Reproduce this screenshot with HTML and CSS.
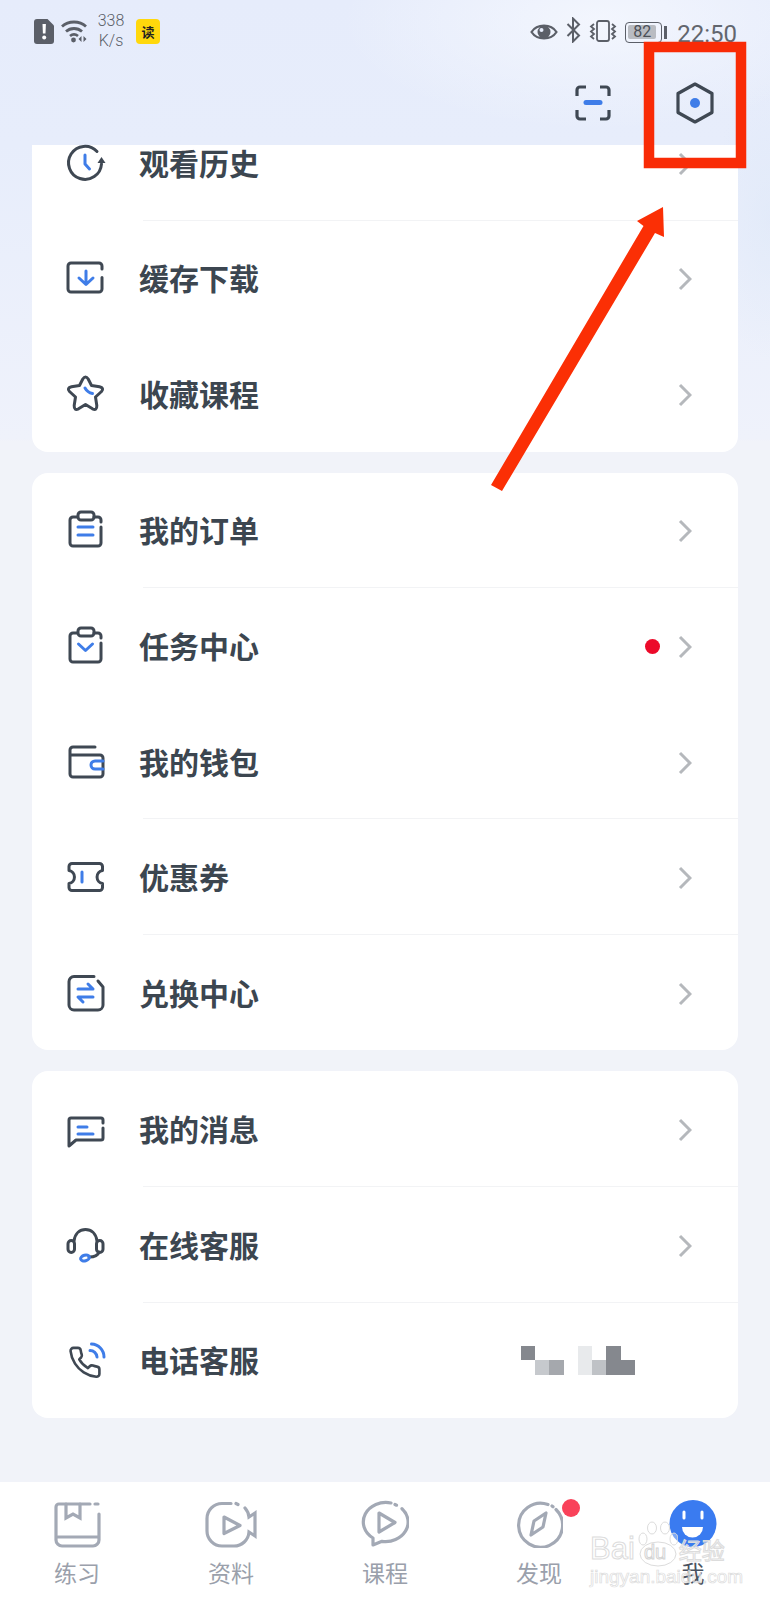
FILE: index.html
```html
<!DOCTYPE html>
<html lang="zh-CN">
<head>
    <meta charset="UTF-8">
    <meta name="viewport" content="width=device-width, initial-scale=1.0">
    <title>我的</title>
    <link rel="stylesheet" href="styles.css">
</head>
<body>
<div class="screen">

    <div class="status">
        <svg class="st-alert" width="20" height="25" viewBox="0 0 20 25"><path d="M3 0H13.5L20 6.5V22a3 3 0 0 1-3 3H3a3 3 0 0 1-3-3V3a3 3 0 0 1 3-3z" fill="#5b5f68"/><path d="M8.5 5h3.4l-.4 9.500H8.900z" fill="#fff"/><circle cx="10.200" cy="18.500" r="2" fill="#fff"/></svg>
        <svg class="st-wifi" width="27" height="24" viewBox="0 0 27 24" fill="none" stroke="#5b5f68" stroke-width="2.800"><path d="M1 7.500C7.500 1.500 18.500 1.500 25 7.500"/><path d="M5 12.500c4.500-4 11.500-4 16 0"/><path d="M9 17c2.500-2 5.500-2 8 0"/><circle cx="12.500" cy="21" r="2.400" fill="#5b5f68" stroke="none"/><path d="M20.500 17v6l-3-3zM22.500 17v6l3-3z" fill="#5b5f68" stroke="none"/></svg>
        <div class="speed">338<br>K/s</div>
        <div class="reader">读</div>
        <div class="status-right">
            <svg width="28" height="18" viewBox="0 0 28 18" fill="none" stroke="#5b5f68" stroke-width="2.200"><path d="M1.500 9C7 .5 21 .5 26.500 9 21 17.500 7 17.500 1.500 9z"/><circle cx="14" cy="9" r="6.500" fill="#5b5f68" stroke="none"/><circle cx="11.500" cy="7" r="2" fill="#e6ecfb" stroke="none"/></svg>
            <svg class="st-bt" width="15" height="26" viewBox="0 0 15 26" fill="none" stroke="#5b5f68" stroke-width="2"><path d="M1.500 7L13 18.500 7 24.500V1.500L13 7.500 1.500 19"/></svg>
            <svg class="st-vib" width="28" height="22" viewBox="0 0 28 22" fill="none" stroke="#5b5f68" stroke-width="1.800"><rect x="8" y="1" width="12" height="20" rx="2"/><path d="M5 4L2 6.500 5 9 2 11.500 5 14 2 16.500 5 19"/><path d="M23 4l3 2.500L23 9l3 2.500L23 14l3 2.500L23 19"/></svg>
            <div class="battery"><div class="battery-level">82</div></div>
            <div class="battery-tip"></div>
            <div class="clock">22:50</div>
        </div>
    </div>

    <div class="topbar">
        <svg class="scan" width="36" height="36" viewBox="0 0 36 36" fill="none" stroke="#3f4853" stroke-width="3.200"><path d="M2 11V5a3 3 0 0 1 3-3h6M25 2h6a3 3 0 0 1 3 3v6M34 25v6a3 3 0 0 1-3 3h-6M11 34H5a3 3 0 0 1-3-3v-6"/><path d="M11 17.500h14" stroke="#3f7de8" stroke-width="5" stroke-linecap="round"/></svg>
        <svg class="hex" width="38" height="42" viewBox="0 0 38 42" fill="none"><path d="M19 2L36 11.500V30.500L19 40 2 30.500V11.500z" stroke="#3f4853" stroke-width="3.200" stroke-linejoin="round"/><circle cx="19" cy="21" r="5" fill="#3f7de8"/></svg>
    </div>

    <div class="content">
        <div class="card card-clipped">
            <div class="row row-clipped sep">
                <svg class="ico" viewBox="0 0 40 40"><path class="dk" d="M32 8.500A16.500 16.500 0 1 0 36.500 21"/><path d="M32.500 20h8l-4-6z" fill="#3f4853"/><path class="bl" d="M20 12v9l4.500 5"/></svg>
                <div class="label">观看历史</div>
                <svg class="chev" viewBox="0 0 14 24"><path d="M2 2l10 10L2 22"/></svg>
            </div>
            <div class="row">
                <svg class="ico" viewBox="0 0 40 40"><path class="dk" d="M37 19.500V31a3 3 0 0 1-3 3H6a3 3 0 0 1-3-3V8a3 3 0 0 1 3-3h28a3 3 0 0 1 3 3v3"/><path class="bl" d="M21 13v13M14 20l7 6.500 7-6.500"/></svg>
                <div class="label">缓存下载</div>
                <svg class="chev" viewBox="0 0 14 24"><path d="M2 2l10 10L2 22"/></svg>
            </div>
            <div class="row">
                <svg class="ico" viewBox="0 0 40 40"><path class="dk" d="M17.800 5Q20.500 1 23.200 5L26.500 11.500 34.500 12.800Q39.500 14 36.500 17.500L30.500 23 31.800 31.500Q32 37 27.500 34.800L20.500 30.500 13.500 34.800Q9 37 9.200 31.500L10.500 23 4.500 17.500Q1.500 14 6.500 12.800L14.500 11.500z"/><path class="bl" d="M20 14q2.500 4.500 7.500 5.500"/></svg>
                <div class="label">收藏课程</div>
                <svg class="chev" viewBox="0 0 14 24"><path d="M2 2l10 10L2 22"/></svg>
            </div>
        </div>

        <div class="card">
            <div class="row sep">
                <svg class="ico" viewBox="0 0 40 40"><path class="dk" d="M36 17v16a3 3 0 0 1-3 3H8a3 3 0 0 1-3-3V10a3 3 0 0 1 3-3h4M29 7h4a3 3 0 0 1 3 3v2"/><rect class="dk" x="13" y="2" width="16" height="8" rx="3"/><path class="bl" d="M13 17h15M13 25h15"/></svg>
                <div class="label">我的订单</div>
                <svg class="chev" viewBox="0 0 14 24"><path d="M2 2l10 10L2 22"/></svg>
            </div>
            <div class="row">
                <svg class="ico" viewBox="0 0 40 40"><path class="dk" d="M36 17v16a3 3 0 0 1-3 3H8a3 3 0 0 1-3-3V10a3 3 0 0 1 3-3h4M29 7h4a3 3 0 0 1 3 3v2"/><rect class="dk" x="13" y="2" width="16" height="8" rx="3"/><path class="bl" d="M13.500 18l7 6.500 7-6.500"/></svg>
                <div class="label">任务中心</div>
                <div class="dot"></div>
                <svg class="chev chev-dot" viewBox="0 0 14 24"><path d="M2 2l10 10L2 22"/></svg>
            </div>
            <div class="row sep">
                <svg class="ico" viewBox="0 0 40 40"><path class="dk" d="M30 5H8a3 3 0 0 0-3 3v24a3 3 0 0 0 3 3h27a3 3 0 0 0 3-3V16a3 3 0 0 0-3-3H5"/><path class="bl" d="M38 19h-8a4 4 0 0 0 0 8h8"/></svg>
                <div class="label">我的钱包</div>
                <svg class="chev" viewBox="0 0 14 24"><path d="M2 2l10 10L2 22"/></svg>
            </div>
            <div class="row sep">
                <svg class="ico" viewBox="0 0 40 40"><path class="dk" d="M7 6.500h27.500a3 3 0 0 1 3 3v4a6.600 6.600 0 0 0 0 13v4a3 3 0 0 1-3 3H7a3 3 0 0 1-3-3v-4a6.600 6.600 0 0 0 0-13v-4a3 3 0 0 1 3-3z"/><path class="bl" d="M17 15v10"/></svg>
                <div class="label">优惠券</div>
                <svg class="chev" viewBox="0 0 14 24"><path d="M2 2l10 10L2 22"/></svg>
            </div>
            <div class="row">
                <svg class="ico" viewBox="0 0 40 40"><path class="dk" d="M29 3.500H9a5 5 0 0 0-5 5V32a5 5 0 0 0 5 5h24a5 5 0 0 0 5-5V14M33 8l5 6"/><path class="bl" d="M13 16h15l-5-5M28 24H13l5 5"/></svg>
                <div class="label">兑换中心</div>
                <svg class="chev" viewBox="0 0 14 24"><path d="M2 2l10 10L2 22"/></svg>
            </div>
        </div>

        <div class="card">
            <div class="row sep">
                <svg class="ico" viewBox="0 0 40 40"><path class="dk" d="M4 37V11a2 2 0 0 1 2-2h30a2 2 0 0 1 2 2v3M38 19v10a2 2 0 0 1-2 2H11L4 37"/><path class="bl" d="M13 18h9M13 25h15"/></svg>
                <div class="label">我的消息</div>
                <svg class="chev" viewBox="0 0 14 24"><path d="M2 2l10 10L2 22"/></svg>
            </div>
            <div class="row sep">
                <svg class="ico" viewBox="0 0 40 40"><path class="dk" d="M9 16C10 8 15 4.500 20.500 4.500S31 8 32 16M24 32c5 0 9-1.500 10-5"/><rect class="dk" x="3" y="15.500" width="6.500" height="12" rx="3.200"/><rect class="dk" x="31.500" y="15.500" width="6.500" height="12" rx="3.200"/><ellipse class="bl" cx="20" cy="33" rx="4.500" ry="2.800" transform="rotate(-15 20 33)"/></svg>
                <div class="label">在线客服</div>
                <svg class="chev" viewBox="0 0 14 24"><path d="M2 2l10 10L2 22"/></svg>
            </div>
            <div class="row">
                <svg class="ico" viewBox="0 0 40 40"><path class="dk thin" transform="translate(2.500 5) scale(1.450)" d="M22 16.920v3a2 2 0 0 1-2.180 2 19.790 19.790 0 0 1-8.630-3.070 19.500 19.500 0 0 1-6-6 19.790 19.790 0 0 1-3.070-8.670A2 2 0 0 1 4.110 2h3a2 2 0 0 1 2 1.720 12.840 12.840 0 0 0 .7 2.810 2 2 0 0 1-.45 2.110L8.090 9.910a16 16 0 0 0 6 6l1.270-1.270a2 2 0 0 1 2.110-.45 12.840 12.840 0 0 0 2.810.7A2 2 0 0 1 22 16.920z"/><path class="bl" d="M26.500 4a13 13 0 0 1 12.500 13M25 10.500a7 7 0 0 1 7 6.500"/></svg>
                <div class="label">电话客服</div>
                <div class="mosaic">
                    <span class="m-a"></span><span class="m-b"></span><span class="m-c"></span>
                    <span class="m-d"></span><span class="m-e"></span><span class="m-f"></span><span class="m-g"></span>
                </div>
            </div>
        </div>
    </div>

    <div class="tabs">
        <div class="tab">
            <svg class="tab-ico" viewBox="0 0 48 48"><path d="M37 4H6a3 3 0 0 0-3 3v33a6 6 0 0 0 6 6h31a6 6 0 0 0 6-6V14M42 4h3M5 37h41"/><path d="M13 4v14l7-4 7 4V4"/></svg>
            <div class="tab-label">练习</div>
        </div>
        <div class="tab">
            <svg class="tab-ico tab-ico-wide" viewBox="0 0 52 48"><path d="M26 3.500h-9a15 15 0 0 0-15 15V31a15 15 0 0 0 15 15h12a15 15 0 0 0 15-14l6 4V13l-6 4q-.5-5-4-9M31 3.500l2 1"/><path d="M19 17l16 8.500-16 8z" stroke-linejoin="round"/></svg>
            <div class="tab-label">资料</div>
        </div>
        <div class="tab">
            <svg class="tab-ico" viewBox="0 0 48 48"><path d="M30 3A22.500 19.500 0 0 0 12 38V45L21 41.300A22.500 19.500 0 0 0 41 8.700M34 4.500l1.500 .7" stroke-linejoin="round"/><path d="M18 13l16 9.500-16 9.500z" stroke-linejoin="round"/></svg>
            <div class="tab-label">课程</div>
        </div>
        <div class="tab">
            <svg class="tab-ico" viewBox="0 0 48 48"><path d="M33 4.500a22 22 0 1 0 8 5M37 6l1 .8"/><path d="M31 13l-3 14-12 8 3-14z" stroke-linejoin="round"/></svg>
            <div class="tab-badge"></div>
            <div class="tab-label">发现</div>
        </div>
        <div class="tab tab-active">
            <svg class="tab-ico" viewBox="0 0 48 48"><circle cx="24" cy="23.500" r="23.500" fill="#3a7bf0" stroke="none"/><path d="M15 12v6M33 12v6" stroke="#fff" stroke-width="3"/><path d="M13 27h21a10.500 10.500 0 0 1-21 0z" fill="#fff" stroke="none"/></svg>
            <div class="tab-label">我</div>
        </div>
    </div>

    <div class="watermark">
        <div class="wm-logo">
            <span class="wm-text">Bai</span>
            <svg class="wm-paw" width="40" height="46" viewBox="0 0 40 46"><g fill="rgba(255,255,255,.35)" stroke="#dcdcdc" stroke-width="1"><ellipse cx="5" cy="18" rx="4" ry="6"/><ellipse cx="14" cy="7" rx="4.500" ry="6"/><ellipse cx="27" cy="7" rx="4.500" ry="6"/><ellipse cx="36" cy="18" rx="4" ry="6"/><ellipse cx="20" cy="33" rx="18" ry="12"/></g></svg>
            <span class="wm-du">du</span>
            <span class="wm-text wm-cn">经验</span>
        </div>
        <div class="wm-url">jingyan.baidu.com</div>
    </div>

    <svg class="mark" width="770" height="1600" viewBox="0 0 770 1600">
        <rect x="649" y="47" width="92" height="116" fill="none" stroke="#f92b06" stroke-width="10.500"/>
        <path d="M663 207L637 221 643.500 226 491 485 502 491 655 233 664 237z" fill="#fb2f05"/>
    </svg>
</div>
</body>
</html>
```

FILE: styles.css
```css
body {
    margin: 0;
    font-family: "Noto Sans CJK SC", sans-serif;
}
.screen {
    position: relative;
    width: 770px;
    height: 1600px;
    overflow: hidden;
    display: flex;
    flex-direction: column;
    background:
        radial-gradient(ellipse 260px 110px at 600px 20px, rgba(248, 250, 255, 0.7), rgba(248, 250, 255, 0)),
        radial-gradient(ellipse 60px 140px at 770px 220px, rgba(222, 232, 248, 0.6), rgba(222, 232, 248, 0)),
        linear-gradient(to bottom, #e6ecfb 0, #e7edfb 145px, #eff2fb 439px, #f1f3f9 441px, #f1f3f9 100%);
}

/* status bar */
.status {
    height: 62px;
    padding: 0 33px 0 34px;
    box-sizing: border-box;
    display: flex;
    align-items: center;
    font-family: Roboto, sans-serif;
    color: #5b5f68;
}
.st-wifi { margin-left: 7px; }
.speed {
    width: 38px;
    margin-left: 4px;
    font-size: 16px;
    line-height: 20px;
    text-align: center;
    font-weight: 300;
}
.reader {
    width: 24px;
    height: 25px;
    margin-left: 6px;
    border-radius: 4px;
    background-color: #ffd80c;
    color: #222;
    font-family: "Noto Sans CJK SC", sans-serif;
    font-size: 13px;
    font-weight: 700;
    line-height: 25px;
    text-align: center;
}
.status-right {
    margin-left: auto;
    display: flex;
    align-items: center;
    margin-top: 2px;
}
.st-bt { margin-left: 8px; margin-top: -4px; }
.st-vib { margin-left: 8px; margin-top: -2px; }
.battery {
    width: 37px;
    height: 21px;
    margin-left: 8px;
    padding: 2px;
    box-sizing: border-box;
    border: 1.5px solid #5b5f68;
    border-radius: 4px;
}
.battery-level {
    width: 26px;
    height: 14px;
    padding: 0 1px;
    background-color: #b9bcc2;
    border-radius: 2px;
    font-size: 16px;
    line-height: 14px;
    text-align: center;
    color: #4c5058;
}
.battery-tip {
    width: 3px;
    height: 13px;
    margin-left: 2px;
    background-color: #5b5f68;
}
.clock {
    margin-left: 10px;
    font-size: 24px;
    letter-spacing: 0;
    margin-top: 3px;
    color: #62666e;
}

/* top actions */
.topbar {
    height: 83px;
    display: flex;
    align-items: flex-start;
    justify-content: flex-end;
}
.scan { margin-top: 23px; margin-right: 65px; }
.hex { margin-top: 20px; margin-right: 56px; }

/* list */
.content {
    flex: 1;
    padding: 0 32px;
    display: flex;
    flex-direction: column;
    gap: 21px;
}
.card {
    background-color: #fff;
    border-radius: 16px;
}
.card-clipped {
    border-radius: 0 0 16px 16px;
}
.row {
    position: relative;
    height: 115.55px;
    box-sizing: border-box;
    padding-left: 33px;
    display: flex;
    align-items: center;
}
.row-clipped {
    height: 75.6px;
    padding-bottom: 40px;
}
.sep::after {
    content: "";
    position: absolute;
    left: 111px;
    right: 0;
    bottom: 0;
    height: 1px;
    background-color: #f2f3f5;
}
.ico {
    width: 40px;
    height: 40px;
    flex: none;
    overflow: visible;
}
.dk {
    fill: none;
    stroke: #3f4853;
    stroke-width: 3;
    stroke-linejoin: round;
    stroke-linecap: round;
}
.thin { stroke-width: 1.800; }
.bl {
    fill: none;
    stroke: #3f7de8;
    stroke-width: 3;
    stroke-linecap: round;
    stroke-linejoin: round;
}
.label {
    margin-left: 34px;
    margin-top: -2px;
    font-size: 30px;
    font-weight: 700;
    color: #3c4650;
    line-height: 40px;
}
.chev {
    width: 14px;
    height: 24px;
    margin-left: auto;
    margin-right: 46px;
    margin-top: 2px;
    flex: none;
    fill: none;
    stroke: #b5b8bc;
    stroke-width: 3;
}
.chev-dot { margin-left: 18px; }
.dot {
    width: 15px;
    height: 15px;
    margin-left: auto;
    margin-top: 0;
    border-radius: 50%;
    background-color: #ec0a2a;
}
.mosaic {
    margin-left: auto;
    margin-right: 103px;
    display: grid;
    grid-template-columns: repeat(8, 14.3px);
    grid-template-rows: 14.5px 14.5px;
}
.m-a { grid-area: 1 / 1; background-color: #85888e; }
.m-b { grid-area: 2 / 2; background-color: #c6c9cd; }
.m-c { grid-area: 2 / 3; background-color: #a5a8ad; }
.m-d { grid-area: 1 / 5 / 3 / 6; background-color: #e8eaec; }
.m-e { grid-area: 2 / 6; background-color: #bfc2c6; }
.m-f { grid-area: 1 / 7 / 3 / 8; background-color: #85888e; }
.m-g { grid-area: 2 / 8; background-color: #85888e; }

/* tab bar */
.tabs {
    height: 118px;
    background-color: #fff;
    display: flex;
}
.tab {
    position: relative;
    flex: 1;
    display: flex;
    flex-direction: column;
    align-items: center;
}
.tab-ico {
    width: 48px;
    height: 48px;
    margin-top: 18px;
    fill: none;
    stroke: #a3a9b5;
    stroke-width: 3.200;
    stroke-linecap: round;
}
.tab-ico-wide { width: 52px; }
.tab-label {
    margin-top: 9px;
    font-size: 23px;
    line-height: 30px;
    color: #9aa0ab;
}
.tab-active .tab-label { color: #4a5260; }
.tab-badge {
    position: absolute;
    top: 17px;
    left: 100px;
    width: 18px;
    height: 18px;
    border-radius: 50%;
    background-color: #f9425a;
}

/* baidu watermark */
.watermark {
    position: absolute;
    left: 590px;
    top: 1517px;
    width: 140px;
    white-space: nowrap;
}
.wm-logo {
    position: relative;
    height: 50px;
    display: flex;
    align-items: flex-end;
}
.wm-text {
    font-family: "Liberation Sans", sans-serif;
    font-size: 31px;
    line-height: 36px;
    color: rgba(255, 255, 255, 0.5);
    -webkit-text-stroke: 1px #dcdcdc;
}
.wm-paw {
    margin-left: 3px;
    flex: none;
}
.wm-du {
    position: absolute;
    left: 54px;
    top: 24px;
    font-family: "Liberation Sans", sans-serif;
    font-size: 20px;
    line-height: 22px;
    color: rgba(255, 255, 255, 0.5);
    -webkit-text-stroke: 1px #d4d4d4;
}
.wm-cn {
    margin-left: 1px;
    font-family: "Noto Sans CJK SC", sans-serif;
    font-size: 23px;
}
.wm-url {
    margin-top: 1px;
    font-family: "Liberation Sans", sans-serif;
    font-size: 19px;
    line-height: 18px;
    color: rgba(255, 255, 255, 0.5);
    -webkit-text-stroke: 0.7px #dcdcdc;
}

/* red annotation drawn over the screenshot */
.mark {
    position: absolute;
    left: 0;
    top: 0;
}
```
